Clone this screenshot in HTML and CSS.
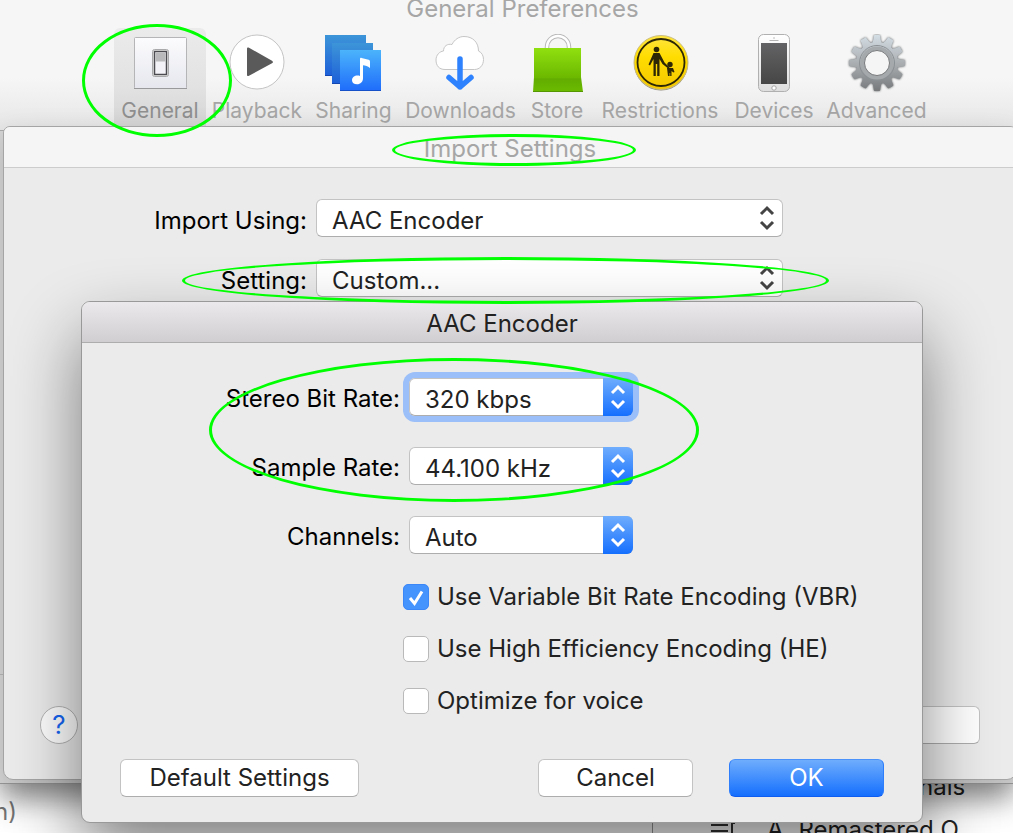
FILE: index.html
```html
<!DOCTYPE html>
<html lang="en">
<head>
    <meta charset="UTF-8">
    <meta name="viewport" content="width=device-width, initial-scale=1.0">
    <title>General Preferences</title>
    <link rel="stylesheet" href="styles.css">
</head>
<body>
    <div class="desktop">
        <!-- Preferences window -->
        <section class="prefs">
            <header class="prefs-header">
                <h1>General Preferences</h1>
                <nav class="toolbar">
                    <button class="tool selected">
                        <svg viewBox="0 0 60 60">
                            <defs>
                                <linearGradient id="plate" x1="0" y1="0" x2="0" y2="1"><stop offset="0" stop-color="#fcfcfe"/><stop offset="1" stop-color="#e6e7ee"/></linearGradient>
                            </defs>
                            <rect x="4.5" y="3.5" width="52" height="51" rx="1" fill="url(#plate)" stroke="#b5b5b8"/>
                            <path d="M4 54.5h53" stroke="#99999c"/>
                            <rect x="22.500" y="15.500" width="16" height="27" rx="2" fill="#eee" stroke="#a9a9ab"/>
                            <rect x="24.500" y="17.500" width="12" height="23" fill="#f3f3f7" stroke="#4c4c50" stroke-width="1.500"/>
                            <rect x="25.500" y="18.500" width="10" height="9" fill="#b9b9bc"/>
                        </svg>
                        <span>General</span>
                    </button>
                    <button class="tool">
                        <svg viewBox="0 0 60 60">
                            <circle cx="30" cy="28" r="27" fill="#fff" stroke="#c4c4c4"/>
                            <path d="M20 14.500c0-1 1-1.400 2-.8l23 13c1.300.8 1.300 1.800 0 2.600l-23 12.500c-1 .6-2 .2-2-.8z" fill="#5a5a5a"/>
                        </svg>
                        <span>Playback</span>
                    </button>
                    <button class="tool">
                        <svg viewBox="0 0 60 60">
                            <defs>
                                <linearGradient id="share1" x1="0" y1="0" x2="0" y2="1"><stop offset="0" stop-color="#3d95d8"/><stop offset="1" stop-color="#1d5fd8"/></linearGradient>
                                <linearGradient id="share2" x1="0" y1="0" x2="0" y2="1"><stop offset="0" stop-color="#4bb4fb"/><stop offset="1" stop-color="#1f6cfb"/></linearGradient>
                            </defs>
                            <rect x="1" y="1" width="41" height="41" fill="url(#share1)"/>
                            <path d="M1 41.500h41" stroke="#1448b0"/>
                            <rect x="8" y="9" width="41" height="41" fill="url(#share1)"/>
                            <path d="M8 49.500h41" stroke="#1448b0"/>
                            <rect x="16" y="16" width="41" height="41" fill="url(#share2)"/>
                            <path d="M16 56.500h41" stroke="#1550c8"/>
                            <path d="M36 25c0-1 .6-1.300 1.600-1.100l7 1.800c1 .3 1.400.9 1.400 2v6.300c-2.500-2-4.500-2.600-7-2.700v13c0 3.500-2.500 6-6 6-3 0-5-1.600-5-4 0-3 2.500-4.800 5.500-4.800 1 0 1.800.1 2.500.4z" fill="#fff"/>
                        </svg>
                        <span>Sharing</span>
                    </button>
                    <button class="tool">
                        <svg viewBox="0 0 60 60">
                            <path d="M14 35.500c-6 0-9-4-9-9.500 0-5 3.500-8.500 7.500-9 0-5 4-7.500 8.500-6.500C23.500 5.500 28 2.500 33 2.500c9 0 14.500 6 14.500 14.500 3.500 1.500 5 5 5 8.500 0 6-4 10-9 10z" fill="#fff" stroke="#c6c6c6"/>
                            <path d="M29 25v28M18 43.500l11 9.500 11-9.500" fill="none" stroke="#2f82fd" stroke-width="5.500" stroke-linecap="round" stroke-linejoin="round"/>
                        </svg>
                        <span>Downloads</span>
                    </button>
                    <button class="tool">
                        <svg viewBox="0 0 60 60">
                            <defs>
                                <linearGradient id="bag" x1="0" y1="0" x2="0" y2="1"><stop offset="0" stop-color="#90e010"/><stop offset=".68" stop-color="#6bb800"/><stop offset=".7" stop-color="#62ac00"/><stop offset="1" stop-color="#6cbc00"/></linearGradient>
                            </defs>
                            <path d="M20 15v-2a11 11 0 0 1 22 0v2" fill="none" stroke="#b9b9b9" stroke-width="4.500"/>
                            <path d="M20 15v-2a11 11 0 0 1 22 0v2" fill="none" stroke="#fff" stroke-width="2.500"/>
                            <path d="M7 14h47v29l2 15H6l1-15z" fill="url(#bag)"/>
                            <path d="M6 57.500h50" stroke="#559700"/>
                        </svg>
                        <span>Store</span>
                    </button>
                    <button class="tool">
                        <svg viewBox="0 0 60 60">
                            <defs>
                                <linearGradient id="sign" x1="0" y1="0" x2="0" y2="1"><stop offset="0" stop-color="#ffe640"/><stop offset=".4" stop-color="#ffdc00"/><stop offset="1" stop-color="#f5c800"/></linearGradient>
                            </defs>
                            <circle cx="31" cy="29.500" r="27" fill="#8d8878"/>
                            <circle cx="31" cy="28.500" r="27" fill="url(#sign)" stroke="#c9bd84"/>
                            <circle cx="31" cy="28.500" r="23.500" fill="none" stroke="#2d2705" stroke-width="1.800"/>
                            <g fill="#2d2705">
                                <circle cx="26.500" cy="15.500" r="2.800"/>
                                <path d="M23.500 19h6l5 9.500 5 5-1 1.200-6-4.700-3-5v17h-2.300v-12h-1.400v12h-2.300v-17l-3.500 6.500-1.500-1z"/>
                                <circle cx="40" cy="30.500" r="2.700"/>
                                <path d="M37 34h6l1.500 4-1 .6-2-1.600v5h-1.300v-3h-.6v3h-1.600z"/>
                            </g>
                        </svg>
                        <span>Restrictions</span>
                    </button>
                    <button class="tool">
                        <svg viewBox="0 0 60 60">
                            <defs>
                                <linearGradient id="phone" x1="0" y1="0" x2="0" y2="1"><stop offset="0" stop-color="#fff"/><stop offset="1" stop-color="#dedede"/></linearGradient>
                                <linearGradient id="glass" x1="0" y1="0" x2="0" y2="1"><stop offset="0" stop-color="#636365"/><stop offset="1" stop-color="#464646"/></linearGradient>
                            </defs>
                            <rect x="14.500" y=".5" width="31" height="57" rx="5" fill="url(#phone)" stroke="#b0b0b0"/>
                            <rect x="17" y="9" width="26" height="41" fill="url(#glass)"/>
                            <path d="M25.500 6.500h9" stroke="#b5b5b5"/>
                            <circle cx="30" cy="4" r=".8" fill="#b5b5b5"/>
                            <circle cx="30" cy="54" r="2.200" fill="#fff" stroke="#a5a5a5"/>
                        </svg>
                        <span>Devices</span>
                    </button>
                    <button class="tool">
                        <svg viewBox="0 0 60 60">
                            <defs>
                                <linearGradient id="steel" x1="0" y1="0" x2="0" y2="1"><stop offset="0" stop-color="#d5dfe6"/><stop offset=".5" stop-color="#a9adb0"/><stop offset="1" stop-color="#717375"/></linearGradient>
                                <path id="tooth" d="M24.500 10c1.500-2 2-4.500 2.300-8 .1-.6.400-.9 1-.9h4.400c.6 0 .9.300 1 .9.300 3.500.8 6 2.300 8z"/>
                                <clipPath id="gear">
                                    <circle cx="30" cy="29" r="21"/>
                                    <use href="#tooth"/>
                                    <use href="#tooth" transform="rotate(30 30 29)"/>
                                    <use href="#tooth" transform="rotate(60 30 29)"/>
                                    <use href="#tooth" transform="rotate(90 30 29)"/>
                                    <use href="#tooth" transform="rotate(120 30 29)"/>
                                    <use href="#tooth" transform="rotate(150 30 29)"/>
                                    <use href="#tooth" transform="rotate(180 30 29)"/>
                                    <use href="#tooth" transform="rotate(210 30 29)"/>
                                    <use href="#tooth" transform="rotate(240 30 29)"/>
                                    <use href="#tooth" transform="rotate(270 30 29)"/>
                                    <use href="#tooth" transform="rotate(300 30 29)"/>
                                    <use href="#tooth" transform="rotate(330 30 29)"/>
                                </clipPath>
                            </defs>
                            <g class="gear-body">
                                <rect width="60" height="60" fill="url(#steel)" clip-path="url(#gear)"/>
                            </g>
                            <circle cx="30" cy="29" r="17.500" fill="none" stroke="#8b9094"/>
                            <circle cx="30" cy="29" r="14.500" fill="none" stroke="#a5a9ac" stroke-width="4"/>
                            <circle cx="30" cy="29" r="12.500" fill="#f5f5f5" stroke="#77797b"/>
                        </svg>
                        <span>Advanced</span>
                    </button>
                </nav>
            </header>
            <div class="prefs-body"></div>

            <!-- Import settings sheet -->
            <section class="sheet">
                <h2>Import Settings</h2>
                <div class="sheet-fields">
                    <label for="import-using">Import Using:</label>
                    <div class="popup">
                        <select id="import-using"><option>AAC Encoder</option></select>
                        <svg class="arrows" viewBox="0 0 30 38"><path d="M8 15l6-6 6 6M8 23l6 6 6-6"/></svg>
                    </div>
                    <label for="setting">Setting:</label>
                    <div class="popup">
                        <select id="setting"><option>Custom...</option></select>
                        <svg class="arrows" viewBox="0 0 30 38"><path d="M8 15l6-6 6 6M8 23l6 6 6-6"/></svg>
                    </div>
                </div>
                <footer class="sheet-footer">
                    <button class="help">?</button>
                    <button class="push"></button>
                </footer>
            </section>
        </section>

        <!-- Encoder dialog -->
        <form class="dialog">
            <h2>AAC Encoder</h2>
            <div class="fields">
                <label for="bit-rate">Stereo Bit Rate:</label>
                <div class="popup blue focused">
                    <select id="bit-rate"><option>320 kbps</option></select>
                    <svg class="arrows" viewBox="0 0 30 38"><path d="M9 15l6-6 6 6M9 23l6 6 6-6"/></svg>
                </div>
                <label for="sample-rate">Sample Rate:</label>
                <div class="popup blue">
                    <select id="sample-rate"><option>44.100 kHz</option></select>
                    <svg class="arrows" viewBox="0 0 30 38"><path d="M9 15l6-6 6 6M9 23l6 6 6-6"/></svg>
                </div>
                <label for="channels">Channels:</label>
                <div class="popup blue">
                    <select id="channels"><option>Auto</option></select>
                    <svg class="arrows" viewBox="0 0 30 38"><path d="M9 15l6-6 6 6M9 23l6 6 6-6"/></svg>
                </div>
            </div>
            <div class="checks">
                <label class="check">
                    <input type="checkbox" checked>
                    <svg viewBox="0 0 26 26"><path d="M7 14l4.500 5.500L19 7.500"/></svg>
                    Use Variable Bit Rate Encoding (VBR)
                </label>
                <label class="check"><input type="checkbox">Use High Efficiency Encoding (HE)</label>
                <label class="check"><input type="checkbox">Optimize for voice</label>
            </div>
            <footer class="dialog-footer">
                <button type="button" class="push wide">Default Settings</button>
                <button type="button" class="push">Cancel</button>
                <button type="submit" class="push primary">OK</button>
            </footer>
        </form>

        <!-- Library window behind -->
        <section class="library">
            <div class="albums">n)</div>
            <div class="tracks">
                <p class="track-end">nals</p>
                <p class="track">
                    <svg viewBox="0 0 24 20"><path d="M0 6h17M0 12h17M0 18h17M24 4h-3v16" fill="none" stroke="#333" stroke-width="2"/></svg>
                    <span>A.</span>
                    <span>Remastered O</span>
                </p>
            </div>
        </section>

        <!-- Highlight rings -->
        <div class="ring ring-general"></div>
        <div class="ring ring-title"></div>
        <div class="ring ring-setting"></div>
        <div class="ring ring-rates"></div>
    </div>
</body>
</html>
```

FILE: styles.css
```css
* {
    box-sizing: border-box;
}

body {
    margin: 0;
    font-family: Inter, "Liberation Sans", sans-serif;
    font-size: 24px;
    line-height: 38px;
    color: #222;
}

h1, h2, p {
    margin: 0;
    font-size: 24px;
    font-weight: normal;
    text-align: center;
}

button, select {
    font: inherit;
    color: inherit;
}

.desktop {
    position: relative;
    display: flex;
    flex-direction: column;
    min-height: 100vh;
    overflow: hidden;
}

/* preferences window */
.prefs {
    position: relative;
    z-index: 1;
    flex: 1;
    display: flex;
    flex-direction: column;
    background: #d4d4d4;
    border-bottom: 1px solid #999;
    box-shadow: 0 14px 30px rgba(0, 0, 0, 0.45);
}

.prefs-header {
    height: 131px;
    padding-left: 32px;
    background: linear-gradient(#f6f6f6 60%, #e6e6e6);
    border-bottom: 1px solid #aaa;
    color: #a6a6a6;
}

.prefs-header h1 {
    height: 28px;
    line-height: 18px;
}

.toolbar {
    display: grid;
    grid-template-columns: 92px 102px 91px 123px 70px 136px 92px 113px;
    justify-content: center;
    padding-left: 2px;
}

.tool {
    display: flex;
    flex-direction: column;
    align-items: center;
    height: 99px;
    padding: 6px 0 0;
    border: none;
    border-radius: 6px 6px 0 0;
    background: none;
    font-size: 21px;
    line-height: 34px;
}

.tool svg {
    width: 60px;
    height: 60px;
    flex: none;
}

.tool.selected {
    background: linear-gradient(#ebebeb, #e2e2e2 60%, #d4d4d4);
    color: #8f8f8f;
}

.gear-body {
    filter: drop-shadow(0 0 1px #55585b);
}

.prefs-body {
    height: 544px;
    background: #d4d4d4;
    border-bottom: 1px solid #b5b5b5;
}

/* sheet */
.sheet {
    position: absolute;
    top: 126px;
    left: 3px;
    right: -4px;
    bottom: 3px;
    display: flex;
    flex-direction: column;
    background: #ebebeb;
    border: 1px solid #a5a5a5;
    border-radius: 7px 7px 10px 10px;
    box-shadow: 0 10px 30px rgba(0, 0, 0, 0.15);
    overflow: hidden;
}

.sheet h2 {
    height: 41px;
    background: #f5f5f5;
    border-bottom: 1px solid #ccc;
    color: #a6a6a6;
    line-height: 44px;
}

.sheet-fields {
    display: grid;
    grid-template-columns: 303px 1fr;
    gap: 22px 9px;
    padding: 31px 233px 0 0;
    color: #000;
}

.sheet-fields label {
    height: 38px;
    line-height: 44px;
    text-align: right;
}

.sheet-footer {
    display: flex;
    justify-content: space-between;
    margin-top: auto;
    padding: 0 36px 35px;
}

.help {
    width: 38px;
    height: 38px;
    padding: 0;
    border: 1px solid #b5b5b5;
    border-radius: 50%;
    background: #fff;
    color: #1767f5;
    font-size: 26px;
    line-height: 36px;
}

/* pop-up menus */
.popup {
    position: relative;
    height: 38px;
}

.popup select {
    width: 100%;
    height: 38px;
    padding: 2px 40px 0 15px;
    border: 1px solid #c3c3c3;
    border-bottom-color: #adadad;
    border-radius: 6px;
    background: #fff;
    appearance: none;
    color: #222;
}

.arrows {
    position: absolute;
    top: 0;
    right: 0;
    width: 30px;
    height: 38px;
    fill: none;
    stroke: #444;
    stroke-width: 3;
    pointer-events: none;
}

.blue .arrows {
    background: linear-gradient(#6fadfd, #156ffe);
    border-radius: 0 6px 6px 0;
    stroke: #fff;
}

.focused {
    border-radius: 6px;
    box-shadow: 0 0 0 6px #9bbff8;
}

/* encoder dialog */
.dialog {
    position: absolute;
    z-index: 2;
    top: 301px;
    left: 81px;
    right: 90px;
    background: #ebebeb;
    border: 1px solid #999;
    border-radius: 9px;
    box-shadow: 0 34px 70px rgba(0, 0, 0, 0.48);
}

.dialog h2 {
    height: 41px;
    border-bottom: 1px solid #adadad;
    border-radius: 8px 8px 0 0;
    background: linear-gradient(#ebe9eb, #d0ced0);
    line-height: 44px;
}

.fields {
    display: grid;
    grid-template-columns: 318px 224px;
    gap: 31px 9px;
    padding-top: 35px;
    color: #000;
}

.fields label {
    height: 38px;
    line-height: 42px;
    text-align: right;
}

.checks {
    display: flex;
    flex-direction: column;
    gap: 26px;
    padding: 30px 0 0 321px;
}

.check {
    position: relative;
    display: flex;
    align-items: center;
    gap: 8px;
    height: 26px;
}

.check input {
    width: 26px;
    height: 26px;
    margin: 0;
    border: 1px solid #b9b9b9;
    border-radius: 5px;
    background: #fff;
    appearance: none;
}

.check input:checked {
    border-color: #3b87f8;
    background: #4593fd;
}

.check svg {
    position: absolute;
    left: 0;
    width: 26px;
    height: 26px;
    fill: none;
    stroke: #fff;
    stroke-width: 3;
}

.dialog-footer {
    display: flex;
    gap: 36px;
    padding: 45px 38px 25px;
}

.push {
    width: 155px;
    height: 38px;
    padding: 0;
    border: 1px solid #c3c3c3;
    border-bottom-color: #adadad;
    border-radius: 6px;
    background: #fff;
    line-height: 36px;
}

.push.wide {
    width: 239px;
    margin-right: auto;
}

.push.primary {
    border-color: #4b93fb #2e7dfb #0f5cf0;
    background: linear-gradient(#6fadfd, #156ffe);
    color: #fff;
}

/* library window */
.library {
    display: flex;
    height: 68px;
    margin-top: -19px;
    background: #fff;
    line-height: 43px;
    overflow: hidden;
}

.albums {
    width: 653px;
    padding-top: 25px;
    border-right: 1px solid #999;
    color: #777;
    text-indent: -6px;
}

.tracks {
    flex: 1;
}

.track-end {
    padding-left: 266px;
    text-align: left;
}

.track {
    display: flex;
    gap: 8px;
    padding-left: 58px;
}

.track svg {
    width: 24px;
    height: 20px;
    margin: 11px 24px 0 0;
}

/* highlight rings */
.ring {
    position: absolute;
    z-index: 3;
    border: 3px solid #0f0;
    border-radius: 50%;
    pointer-events: none;
}

.ring-general {
    top: 24px;
    left: 82px;
    width: 150px;
    height: 113px;
}

.ring-title {
    top: 134px;
    left: 392px;
    width: 244px;
    height: 32px;
}

.ring-setting {
    top: 257px;
    left: 182px;
    width: 647px;
    height: 47px;
}

.ring-rates {
    top: 358px;
    left: 209px;
    width: 490px;
    height: 144px;
}
```
